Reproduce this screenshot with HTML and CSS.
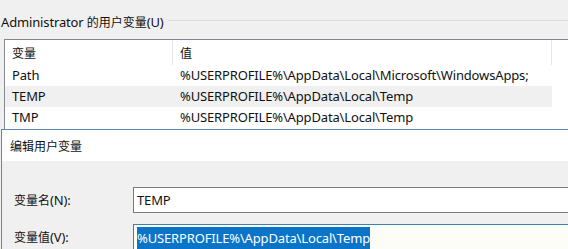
FILE: index.html
```html
<!DOCTYPE html>
<html>
<head>
<meta charset="utf-8">
<link rel="stylesheet" href="styles.css">
</head>
<body>
<div class="screen">
  <div class="group">
    <div class="legend">Administrator <span class="zh">的用户变量</span>(U)</div>
    <div class="rule"></div>
  </div>
  <div class="list">
    <div class="row head">
      <div class="c1"><span class="zh">变量</span></div>
      <div class="c2"><span class="zh">值</span></div>
    </div>
    <div class="row">
      <div class="c1">Path</div>
      <div class="c2">%USERPROFILE%\AppData\Local\Microsoft\WindowsApps;</div>
    </div>
    <div class="row sel">
      <div class="c1">TEMP</div>
      <div class="c2">%USERPROFILE%\AppData\Local\Temp</div>
    </div>
    <div class="row">
      <div class="c1">TMP</div>
      <div class="c2">%USERPROFILE%\AppData\Local\Temp</div>
    </div>
  </div>
  <div class="dialog">
    <div class="title"><span class="zh">编辑用户变量</span></div>
    <div class="body">
      <div class="field">
        <div class="label"><span class="zh">变量名</span>(N):</div>
        <div class="input">TEMP</div>
      </div>
      <div class="field">
        <div class="label"><span class="zh">变量值</span>(V):</div>
        <div class="input focus"><span class="hl">%USERPROFILE%\AppData\Local\Temp</span></div>
      </div>
    </div>
  </div>
</div>
</body>
</html>
```
FILE: styles.css
```css
html, body {
  margin: 0;
  padding: 0;
  background: #f0f0f0;
  overflow: hidden;
}
.screen {
  position: relative;
  width: 568px;
  height: 249px;
  overflow: hidden;
  font-family: "Noto Sans", "Noto Sans CJK SC", sans-serif;
  font-size: 13px;
  letter-spacing: -0.15px;
  color: #111;
  background: #f0f0f0;
}
.zh {
  font-family: "Noto Sans CJK SC", sans-serif;
  font-size: 12px;
  letter-spacing: 0;
}
.group {
  display: flex;
  align-items: flex-start;
  height: 38px;
  padding-top: 12px;
  box-sizing: border-box;
}
.legend {
  padding-left: 1px;
  white-space: nowrap;
  line-height: 20px;
}
.rule {
  flex: 1;
  height: 0;
  border-top: 1px solid #dcdcdc;
  margin-left: 4px;
  margin-top: 8px;
}
.list {
  margin-left: 4px;
  margin-top: 1px;
  background: #fff;
  border-left: 1px solid #828790;
  border-top: 1px solid #828790;
  height: 100px;
}
.row {
  display: flex;
  height: 21px;
  line-height: 21px;
  white-space: nowrap;
}
.row.head {
  height: 25px;
  line-height: 25px;
}
.c1 {
  width: 168px;
  padding-left: 7px;
  box-sizing: border-box;
}
.c2 {
  width: 379px;
  padding-left: 7px;
  box-sizing: border-box;
}
.head .c1 {
  border-right: 1px solid #e5e5e5;
}
.head .c2 {
  border-right: 1px solid #e5e5e5;
}
.row.sel .c1, .row.sel .c2 {
  background: #f0f0f0;
}
.dialog {
  position: absolute;
  left: 1px;
  top: 129px;
  width: 600px;
  height: 140px;
  border: 1px solid #5d87b5;
  background: #f0f0f0;
}
.title {
  background: #fff;
  height: 31px;
  line-height: 32px;
  padding-left: 8px;
}
.body {
  padding-top: 26px;
  display: flex;
  flex-direction: column;
  gap: 11px;
}
.field {
  display: flex;
  align-items: center;
}
.label {
  width: 131px;
  padding-left: 12px;
  box-sizing: border-box;
}
.input {
  flex: 1;
  height: 26px;
  line-height: 24px;
  box-sizing: border-box;
  border: 1px solid #7a7a7a;
  background: #fff;
  padding-left: 3px;
  white-space: nowrap;
}
.input.focus {
  border-color: #3c7fb1;
  background: #fbfdf6;
  padding-top: 1px;
}
.hl {
  background: #0a74c9;
  color: #fff;
  padding: 2px 0;
}
```
